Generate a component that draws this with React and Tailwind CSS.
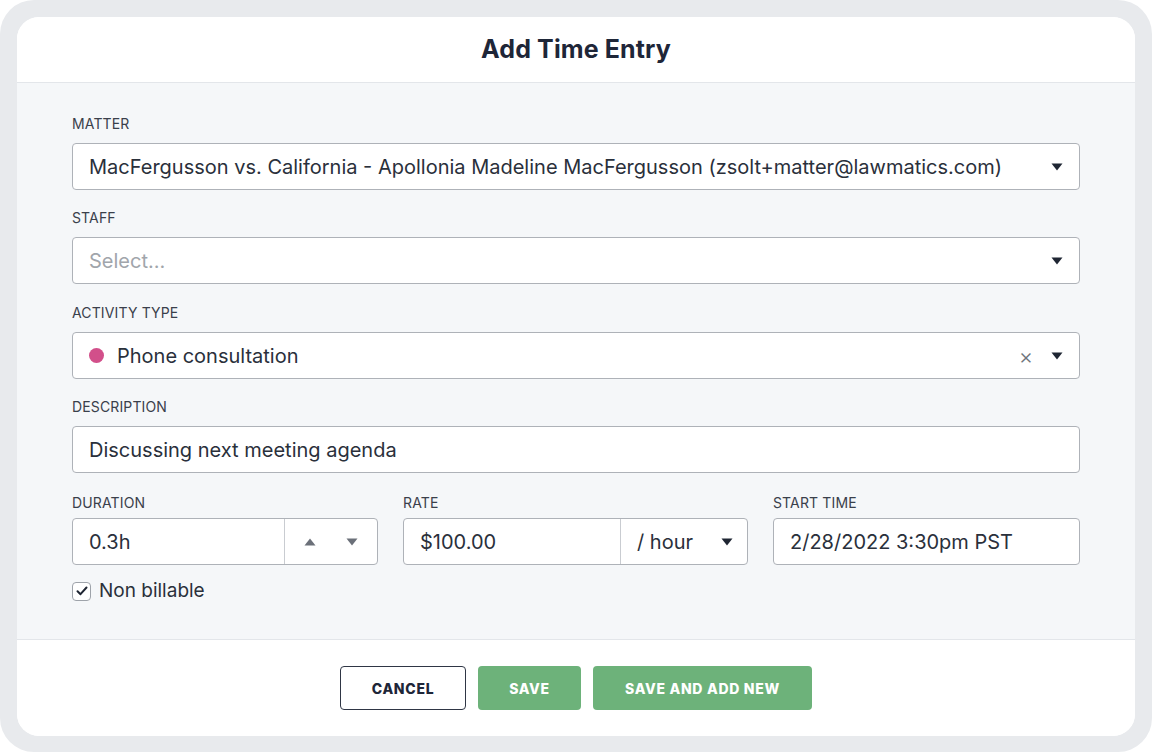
import React from "react";

const font = { fontFamily: "Inter, 'Noto Sans', sans-serif" };

function Caret({ className = "text-[#1f2633]" }) {
  return (
    <svg width="12" height="8" viewBox="0 0 12 8" className={className}>
      <path d="M0.5 0.5 L11.5 0.5 L6 7.5 Z" fill="currentColor" />
    </svg>
  );
}

function CaretUp({ className = "text-[#6b7079]" }) {
  return (
    <svg width="12" height="8" viewBox="0 0 12 8" className={className}>
      <path d="M0.5 7.5 L11.5 7.5 L6 0.5 Z" fill="currentColor" />
    </svg>
  );
}

function Label({ children, tight }) {
  return (
    <div
      className={
        (tight ? "mb-[5px] " : "mb-[9px] ") +
        "h-[20px] text-[14px] leading-[20px] text-[#3a404b] tracking-[0.01em]"
      }
    >
      {children}
    </div>
  );
}

const boxCls =
  "h-[47px] rounded-[4px] border border-[#aeb2b8] bg-white flex items-center text-[20px] text-[#2a303b]";

export default function App() {
  return (
    <div className="w-[1152px] h-[754px] bg-white" style={font}>
      <div className="w-[1152px] h-[752px] rounded-[34px] bg-[#e8eaed] pt-[17px] pl-[17px] pr-[17px] pb-[16px]">
        <div className="h-full rounded-[22px] overflow-hidden bg-white flex flex-col">
          <div className="h-[66px] shrink-0 flex items-center justify-center border-b border-[#e3e6ea] bg-white">
            <h1 className="text-[25px] font-bold text-[#1e2638] tracking-[0.005em]">Add Time Entry</h1>
          </div>
          <div className="flex-1 bg-[#f5f7f9] px-[55px] pt-[31px]">
            <div className="mb-[18px]">
              <Label>MATTER</Label>
              <div className={boxCls + " pl-[16px] pr-[16px]"}>
                <span className="flex-1 truncate">
                  MacFergusson vs. California - Apollonia Madeline MacFergusson (zsolt+matter@lawmatics.com)
                </span>
                <Caret />
              </div>
            </div>
            <div className="mb-[19px]">
              <Label>STAFF</Label>
              <div className={boxCls + " pl-[16px] pr-[16px]"}>
                <span className="flex-1 text-[#a1a5ab]">Select...</span>
                <Caret />
              </div>
            </div>
            <div className="mb-[18px]">
              <Label>ACTIVITY TYPE</Label>
              <div className={boxCls + " pl-[16px] pr-[16px]"}>
                <span className="w-[15px] h-[15px] rounded-full bg-[#d24f8a] mr-[13px]" />
                <span className="flex-1">Phone consultation</span>
                <span className="text-[22px] font-light text-[#6f747c] mr-[18px] leading-none">×</span>
                <Caret />
              </div>
            </div>
            <div className="mb-[20px]">
              <Label>DESCRIPTION</Label>
              <div className={boxCls + " pl-[16px] pr-[16px]"}>
                <span className="flex-1">Discussing next meeting agenda</span>
              </div>
            </div>
            <div className="grid grid-cols-[306px_345px_1fr] gap-x-[25px]">
              <div>
                <Label tight>DURATION</Label>
                <div className={boxCls}>
                  <span className="w-[212px] pl-[16px] h-full flex items-center border-r border-[#c9ccd1]">0.3h</span>
                  <div className="flex-1 flex items-center justify-around pl-[4px] pr-[4px]">
                    <CaretUp />
                    <Caret className="text-[#6b7079]" />
                  </div>
                </div>
              </div>
              <div>
                <Label tight>RATE</Label>
                <div className={boxCls}>
                  <span className="w-[217px] pl-[16px] h-full flex items-center border-r border-[#c9ccd1]">$100.00</span>
                  <div className="flex-1 flex items-center pl-[16px] pr-[14px]">
                    <span className="flex-1">/ hour</span>
                    <Caret />
                  </div>
                </div>
              </div>
              <div>
                <Label tight>START TIME</Label>
                <div className={boxCls + " pl-[16px]"}>
                  <span>2/28/2022 3:30pm PST</span>
                </div>
              </div>
            </div>
            <div className="mt-[12px] flex items-center">
              <span className="w-[19px] h-[19px] rounded-[4px] border border-[#9ea3aa] bg-white flex items-center justify-center mr-[8px]">
                <svg width="12" height="10" viewBox="0 0 12 10">
                  <path d="M1.5 5.2 L4.5 8.2 L10.5 1.5" fill="none" stroke="#1f2633" strokeWidth="2" strokeLinecap="round" strokeLinejoin="round" />
                </svg>
              </span>
              <span className="text-[19px] text-[#2a303b]">Non billable</span>
            </div>
          </div>
          <div className="h-[97px] shrink-0 border-t border-[#e3e6ea] bg-white flex items-center justify-center gap-[12px]">
            <button className="w-[126px] h-[44px] rounded-[4px] border-[1.5px] border-[#2f3645] bg-white text-[14px] font-extrabold text-[#1e2638] tracking-[0.05em]">
              CANCEL
            </button>
            <button className="w-[103px] h-[44px] rounded-[4px] bg-[#6db27a] text-[14px] font-extrabold text-white tracking-[0.05em]">
              SAVE
            </button>
            <button className="w-[219px] h-[44px] rounded-[4px] bg-[#6db27a] text-[14px] font-extrabold text-white tracking-[0.05em]">
              SAVE AND ADD NEW
            </button>
          </div>
        </div>
      </div>
    </div>
  );
}
